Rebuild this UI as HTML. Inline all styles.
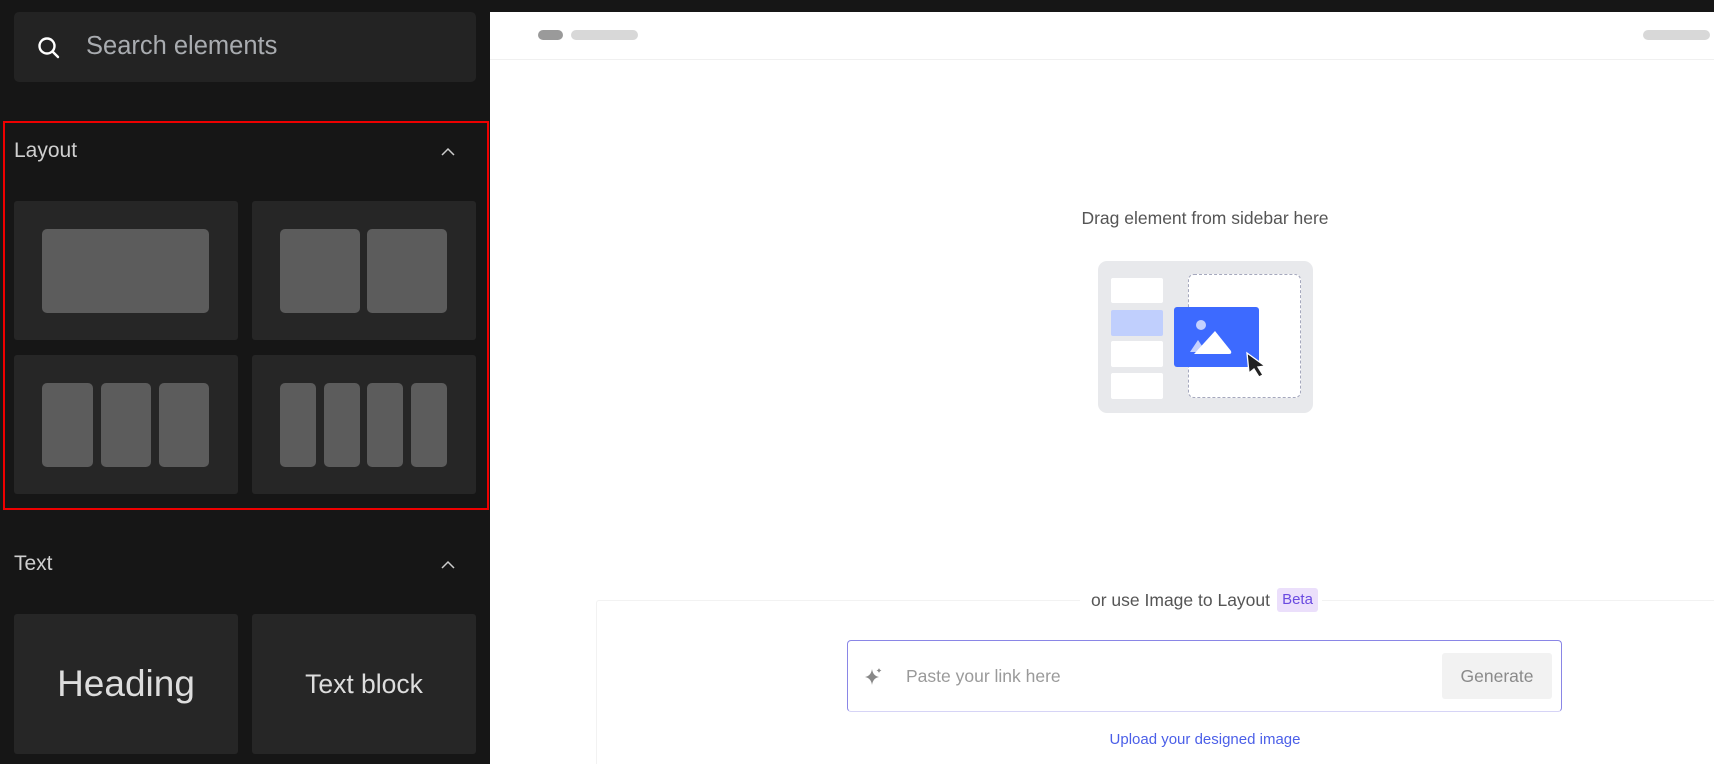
<!DOCTYPE html>
<html><head><meta charset="utf-8"><style>
*{margin:0;padding:0;box-sizing:border-box}
body{width:1714px;height:764px;overflow:hidden;background:#161616;font-family:"Liberation Sans",Arial,sans-serif;position:relative}
.a{position:absolute}
.card{position:absolute;background:#262626;border-radius:3px}
.r{position:absolute;background:#5c5c5c;border-radius:5px}
.h{color:#cfcfcf;font-size:21px}
</style></head><body>
<div class="a" style="left:0;top:0;width:490px;height:764px;background:#161616"></div>
<div class="a" style="left:14px;top:12px;width:462px;height:70px;background:#232323;border-radius:5px"></div>
<svg class="a" style="left:36px;top:35px" width="26" height="26" viewBox="0 0 26 26"><circle cx="11" cy="11" r="7.5" fill="none" stroke="#fff" stroke-width="2.4"/><path d="M16.5 16.5L22 22" stroke="#fff" stroke-width="2.4" stroke-linecap="round"/></svg>
<div class="a" style="left:86px;top:32px;font-size:25.5px;color:#a9acb0">Search elements</div>

<div class="a" style="left:3px;top:121px;width:486px;height:389px;border:2.5px solid #e00"></div>
<div class="a h" style="left:14px;top:139px">Layout</div>
<svg class="a" style="left:440px;top:146px" width="16" height="12"><path d="M2 9L8 3L14 9" fill="none" stroke="#ccc" stroke-width="1.5"/></svg>
<div class="card" style="left:14px;top:201px;width:224px;height:139px"></div>
<div class="card" style="left:252px;top:201px;width:224px;height:139px"></div>
<div class="card" style="left:14px;top:355px;width:224px;height:139px"></div>
<div class="card" style="left:252px;top:355px;width:224px;height:139px"></div>
<div class="r" style="left:42px;top:229px;width:167px;height:84px"></div>
<div class="r" style="left:280px;top:229px;width:80px;height:84px"></div>
<div class="r" style="left:367px;top:229px;width:80px;height:84px"></div>
<div class="r" style="left:42px;top:383px;width:51px;height:84px"></div>
<div class="r" style="left:101px;top:383px;width:50px;height:84px"></div>
<div class="r" style="left:159px;top:383px;width:50px;height:84px"></div>
<div class="r" style="left:280px;top:383px;width:36px;height:84px"></div>
<div class="r" style="left:324px;top:383px;width:36px;height:84px"></div>
<div class="r" style="left:367px;top:383px;width:36px;height:84px"></div>
<div class="r" style="left:411px;top:383px;width:36px;height:84px"></div>

<div class="a h" style="left:14px;top:552px">Text</div>
<svg class="a" style="left:440px;top:559px" width="16" height="12"><path d="M2 9L8 3L14 9" fill="none" stroke="#ccc" stroke-width="1.5"/></svg>
<div class="card" style="left:14px;top:614px;width:224px;height:140px;display:flex;align-items:center;justify-content:center;color:#ddd;font-size:37px">Heading</div>
<div class="card" style="left:252px;top:614px;width:224px;height:140px;display:flex;align-items:center;justify-content:center;color:#ddd;font-size:26.5px">Text block</div>

<div class="a" style="left:490px;top:12px;width:1224px;height:752px;background:#fff"></div>
<div class="a" style="left:490px;top:59px;width:1224px;height:1px;background:#f0f0f0"></div>
<div class="a" style="left:538px;top:30px;width:25px;height:10px;border-radius:5px;background:#9a9a9a"></div>
<div class="a" style="left:571px;top:30px;width:67px;height:10px;border-radius:5px;background:#d8d8d8"></div>
<div class="a" style="left:1643px;top:30px;width:67px;height:10px;border-radius:5px;background:#d8d8d8"></div>

<div class="a" style="left:905px;top:208px;width:600px;text-align:center;font-size:17.5px;color:#555">Drag element from sidebar here</div>
<div class="a" style="left:1098px;top:261px;width:215px;height:152px;background:#e8e9ec;border-radius:9px"></div>
<div class="a" style="left:1111px;top:278px;width:52px;height:25px;background:#fff;border-radius:2px"></div>
<div class="a" style="left:1111px;top:310px;width:52px;height:26px;background:#c0cffd;border-radius:2px"></div>
<div class="a" style="left:1111px;top:341px;width:52px;height:26px;background:#fff;border-radius:2px"></div>
<div class="a" style="left:1111px;top:373px;width:52px;height:26px;background:#fff;border-radius:2px"></div>
<div class="a" style="left:1188px;top:274px;width:113px;height:124px;background:#fff;border:1.5px dashed #a5a8bd;border-radius:6px"></div>
<div class="a" style="left:1174px;top:307px;width:85px;height:60px;background:#3d6aff;border-radius:3px"></div>
<svg class="a" style="left:1174px;top:307px" width="85" height="60"><circle cx="27" cy="18" r="5" fill="#c4d1ff"/><path d="M16 45L24 33L32 45Z" fill="#c4d1ff"/><path d="M20 47L41 24L57 44Q58 47 55 47Z" fill="#fff"/></svg>
<svg class="a" style="left:1243px;top:350px" width="30" height="30"><path d="M4 3L22 16L15 17L20 25L16 27L11 19L6 23Z" fill="#222" stroke="#fff" stroke-width="1.3"/></svg>

<div class="a" style="left:596px;top:600px;width:1118px;height:164px;border:1px solid #f2f2f2;border-right:none;border-bottom:none;border-radius:3px 0 0 0"></div>
<div class="a" style="left:1080px;top:589px;width:242px;height:24px;background:#fff"></div>
<div class="a" style="left:1091px;top:590px;font-size:17.5px;color:#555">or use Image to Layout</div>
<div class="a" style="left:1277px;top:588px;width:41px;height:24px;background:#ebdffb;border-radius:3px;color:#6a4ae0;font-size:15px;text-align:center;line-height:24px">Beta</div>
<div class="a" style="left:847px;top:640px;width:715px;height:72px;border:1px solid #8a86e6;border-bottom-color:#d6d4f6;border-radius:4px"></div>
<svg class="a" style="left:864px;top:666px" width="20" height="20"><path d="M8 3Q9 10 15 11Q9 12 8 19Q7 12 1 11Q7 10 8 3Z" fill="#888"/><path d="M15 2Q15.5 4 17.5 4.5Q15.5 5 15 7Q14.5 5 12.5 4.5Q14.5 4 15 2Z" fill="#888"/></svg>
<div class="a" style="left:906px;top:666px;font-size:17.5px;color:#9a9a9a">Paste your link here</div>
<div class="a" style="left:1442px;top:653px;width:110px;height:46px;background:#f2f2f2;border-radius:3px;color:#8a8a8a;font-size:17.5px;text-align:center;line-height:46px">Generate</div>
<div class="a" style="left:905px;top:731px;width:600px;text-align:center;font-size:15px;color:#4b5fe8">Upload your designed image</div>
</body></html>
